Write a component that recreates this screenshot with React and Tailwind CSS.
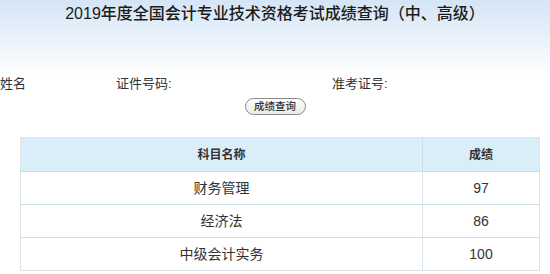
const rows = [
  { name: "财务管理", score: "97" },
  { name: "经济法", score: "86" },
  { name: "中级会计实务", score: "100" },
];

const App = () => {
  return (
    <div
      className="w-[550px] h-[274px] overflow-hidden bg-linear-to-b from-[#d4e5f5] from-0% to-white to-[28%] text-[#2b2b2b]"
      style={{ fontFamily: '"Liberation Sans", "Noto Sans CJK SC", sans-serif' }}
    >
      <h1 className="pt-[4px] text-center text-[16px] leading-[20px] font-medium text-[#1c1c1c]">
        2019年度全国会计专业技术资格考试成绩查询（中、高级）
      </h1>

      <div className="mt-[52px] flex text-[13px] leading-[16px] text-[#333]">
        <span className="w-[116px]">姓名</span>
        <span className="w-[216px]">证件号码:</span>
        <span>准考证号:</span>
      </div>

      <div className="mt-[6px] flex justify-center">
        <button className="h-[17px] w-[61px] rounded-full border border-[#8a8a8a] bg-linear-to-b from-white to-[#e9e9e9] text-[10.5px] leading-[15px] font-medium text-[#333]">
          成绩查询
        </button>
      </div>

      <table className="mt-[22px] ml-[20px] w-[520px] border-collapse border border-[#dfe6eb] bg-white">
        <thead>
          <tr className="h-[34px] bg-[#d9eef9]">
            <th className="w-[402px] border-r border-b border-[#cfdde6] text-[12px] font-bold text-[#333]">科目名称</th>
            <th className="border-b border-[#cfdde6] text-[12px] font-bold text-[#333]">成绩</th>
          </tr>
        </thead>
        <tbody>
          {rows.map((r) => (
            <tr key={r.name} className="h-[33px] border-b border-[#cfdfe6] last:border-b-0">
              <td className="border-r border-[#dbe5eb] text-center text-[14px] text-[#333]">{r.name}</td>
              <td className="text-center text-[14px] text-[#333]">{r.score}</td>
            </tr>
          ))}
        </tbody>
      </table>
    </div>
  );
};

export default App;
